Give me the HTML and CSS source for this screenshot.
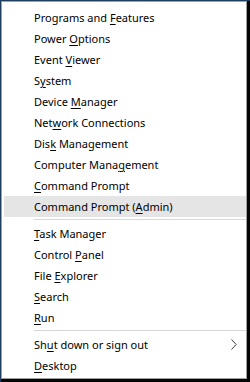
FILE: index.html
```html
<!DOCTYPE html>
<html lang="en">
<head>
  <meta charset="UTF-8">
  <title>Quick Link Menu</title>
  <link rel="stylesheet" href="styles.css">
</head>
<body>
  <div class="frame">
    <ul class="menu">
      <li class="item">Programs and <u>F</u>eatures</li>
      <li class="item">Power <u>O</u>ptions</li>
      <li class="item">Event <u>V</u>iewer</li>
      <li class="item">S<u>y</u>stem</li>
      <li class="item">Device <u>M</u>anager</li>
      <li class="item">Net<u>w</u>ork Connections</li>
      <li class="item">Dis<u>k</u> Management</li>
      <li class="item">Computer Mana<u>g</u>ement</li>
      <li class="item"><u>C</u>ommand Prompt</li>
      <li class="item hover">Command Prompt (<u>A</u>dmin)</li>
      <li class="sep"></li>
      <li class="item"><u>T</u>ask Manager</li>
      <li class="item">Control <u>P</u>anel</li>
      <li class="item">File <u>E</u>xplorer</li>
      <li class="item"><u>S</u>earch</li>
      <li class="item"><u>R</u>un</li>
      <li class="sep"></li>
      <li class="item sub">Sh<u>u</u>t down or sign out
        <svg class="arrow" width="6" height="11" viewBox="0 0 6 11"><polyline points="0.5,0.5 5.2,5.5 0.5,10.5" fill="none" stroke="#3a3a4a" stroke-width="1"/></svg>
      </li>
      <li class="item"><u>D</u>esktop</li>
    </ul>
  </div>
</body>
</html>
```

FILE: styles.css
```css
html, body {
  margin: 0;
  padding: 0;
}
body {
  background: #050505;
  font-family: "Noto Sans", "Open Sans", sans-serif;
  font-size: 11px;
  color: #000;
}
.frame {
  width: 250px;
  height: 382px;
  box-sizing: border-box;
  border-top: 1px solid #1f3d5e;
  border-left: 1px solid #1f3d5e;
}
.menu {
  list-style: none;
  margin: 0;
  width: 246px;
  height: 378px;
  box-sizing: border-box;
  border: 1px solid #a0a0a0;
  background: #fff;
  padding: 5px 0 0 2px;
}
.item {
  position: relative;
  height: 21px;
  line-height: 21px;
  padding-left: 30px;
  white-space: nowrap;
}
.item u {
  text-underline-offset: 2px;
}
.hover {
  background: #e5e5e5;
}
.sep {
  height: 1px;
  margin: 2px 0 3px 30px;
  background: #d7d7d7;
}
.arrow {
  position: absolute;
  right: 9px;
  top: 5px;
}
```
